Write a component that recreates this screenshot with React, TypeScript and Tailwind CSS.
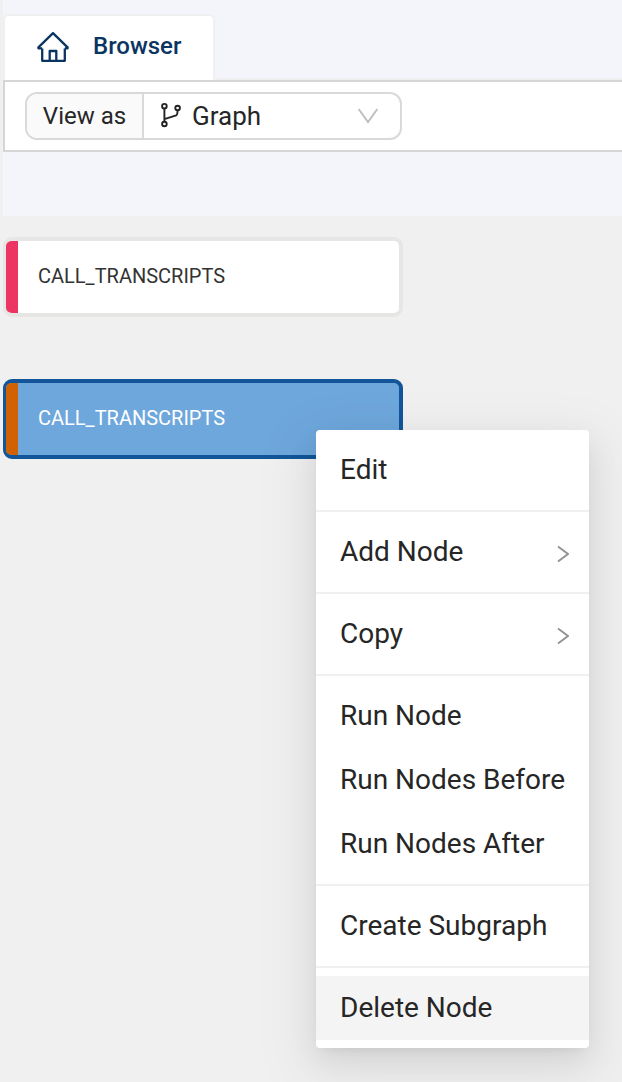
import React from "react";

type MenuEntry = { label: string; submenu?: boolean; active?: boolean };

const groups: MenuEntry[][] = [
  [{ label: "Edit" }],
  [{ label: "Add Node", submenu: true }],
  [{ label: "Copy", submenu: true }],
  [{ label: "Run Node" }, { label: "Run Nodes Before" }, { label: "Run Nodes After" }],
  [{ label: "Create Subgraph" }],
  [{ label: "Delete Node", active: true }],
];

function HomeIcon() {
  return (
    <svg className="h-8 w-8 shrink-0" viewBox="0 0 32 32" fill="none" stroke="#0b3561" strokeWidth="2.3" strokeLinejoin="round">
      <path d="M5.2 17.5V29.8H27.8V17.5M12.7 29.5V20H19.3V29.5" />
      <path d="M5.2 17.3H1.4V16.3L16 2.2L30.6 16.3V17.3H27.8" />
    </svg>
  );
}

function BranchIcon() {
  return (
    <svg className="h-6 w-5 shrink-0 overflow-visible" viewBox="0 0 20 24" fill="none" stroke="#222" strokeWidth="1.9">
      <circle cx="4.4" cy="2.2" r="2.3" />
      <circle cx="17.6" cy="4" r="2.3" />
      <circle cx="4.4" cy="20" r="2.3" />
      <path d="M4.4 4.5V17.7M4.4 15.2L16.2 11.4Q17.4 11 17.6 6.3" />
    </svg>
  );
}

function ContextMenu() {
  return (
    <div className="absolute left-[316px] top-[430px] w-[273px] rounded bg-white py-2 shadow-[0_6px_12px_-8px_rgba(0,0,0,0.12),0_12px_32px_rgba(0,0,0,0.08),0_18px_56px_16px_rgba(0,0,0,0.05)]">
      {groups.map((group, i) => (
        <div key={i} className={i > 0 ? "mt-2 border-t-2 border-[#f0f0f0] pt-2" : ""}>
          {group.map((item) => (
            <div
              key={item.label}
              className={`flex h-16 items-center justify-between whitespace-nowrap pl-6 pr-5 text-[28px] leading-[44px] text-[#262626] ${item.active ? "bg-[#f4f4f4]" : ""}`}
            >
              {item.label}
              {item.submenu && (
                <svg className="mt-1 h-[18px] w-3" viewBox="0 0 12 18" fill="none" stroke="#929292" strokeWidth="1.9">
                  <path d="M1 1.4L11 9L1 16.6" />
                </svg>
              )}
            </div>
          ))}
        </div>
      ))}
    </div>
  );
}

export default function App() {
  return (
    <div className="relative h-[1082px] w-[622px] overflow-hidden bg-[#f0f0f0] pl-[3px] font-['Roboto',sans-serif]">
      <div className="h-[216px] bg-[#f4f5fa] pt-[14px]">
        <div className="flex h-[66px]">
          <div className="flex w-[212px] rounded-t-md border-2 border-b-0 border-[#f0f0f0] bg-white pl-8 pt-[15px] text-2xl font-medium text-[#0b3561]">
            <HomeIcon />
            <span className="ml-6 leading-[30px]">Browser</span>
          </div>
          <div className="flex-1 border-b-2 border-[#f0f0f0]" />
        </div>
        <div className="flex h-[72px] items-center border-2 border-r-0 border-[#d6d6d6] bg-white pl-5">
          <div className="flex h-12 w-[377px] overflow-hidden rounded-xl border-2 border-[#d9d9d9] text-[#262626]">
            <div className="flex w-[117px] items-center justify-center border-r-2 border-[#d9d9d9] bg-[#fafafa] text-2xl">View as</div>
            <div className="flex flex-1 items-center pl-4 pr-[22px] text-[26px]">
              <BranchIcon />
              <span className="ml-3">Graph</span>
              <svg className="ml-auto h-4 w-5" viewBox="0 0 20 16" fill="none" stroke="#bfbfbf" strokeWidth="1.9">
                <path d="M0.7 1L10 14L19.3 1" />
              </svg>
            </div>
          </div>
        </div>
      </div>
      <div className="flex flex-col gap-[62px] pt-[21px] text-xl">
        <div className="flex h-20 w-[400px] overflow-hidden rounded-[9px] border-4 border-l-[3px] border-[#e6e6e4] bg-white text-[#333]">
          <div className="w-3 bg-[#ed3563]" />
          <span className="pl-5 leading-[70px]">CALL_TRANSCRIPTS</span>
        </div>
        <div className="flex h-20 w-[400px] overflow-hidden rounded-[9px] border-4 border-l-[3px] border-[#125699] bg-[#6ea7dc] text-white">
          <div className="w-3 bg-[#d16203]" />
          <span className="pl-5 leading-[70px]">CALL_TRANSCRIPTS</span>
        </div>
      </div>
      <ContextMenu />
    </div>
  );
}
